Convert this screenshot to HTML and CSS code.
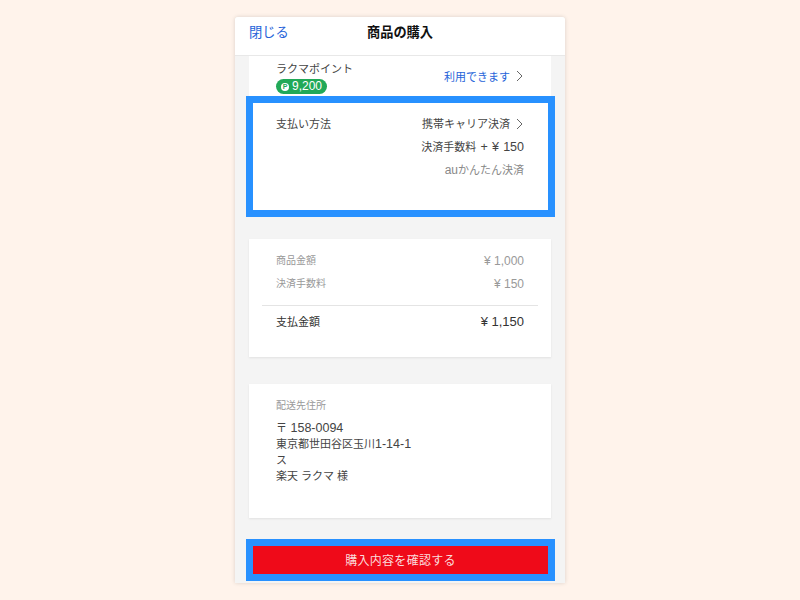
FILE: index.html
```html
<!DOCTYPE html>
<html lang="ja">
<head>
<meta charset="utf-8">
<title>商品の購入</title>
<link rel="stylesheet" href="styles.css">
</head>
<body>
<div class="phone">
  <header class="header">
    <a class="close">閉じる</a>
    <h1 class="title">商品の購入</h1>
  </header>
  <main class="content">
    <section class="card points">
      <div>
        <div class="label">ラクマポイント</div>
        <span class="badge"><span class="badge-p">P</span>9,200</span>
      </div>
      <div class="link-row">利用できます<svg class="chev" viewBox="0 0 7 12"><path d="M1 1l5 5-5 5"/></svg></div>
    </section>
    <section class="highlight pay">
      <div class="pay-row">
        <div class="label">支払い方法</div>
        <div class="pay-right">
          <div class="pay-method">携帯キャリア決済<svg class="chev" viewBox="0 0 7 12"><path d="M1 1l5 5-5 5"/></svg></div>
          <div class="pay-fee">決済手数料<span class="lat fee-amount"> + ¥ 150</span></div>
          <div class="pay-note"><span class="lat">au</span>かんたん決済</div>
        </div>
      </div>
    </section>
    <section class="card summary">
      <div class="sum-row"><span>商品金額</span><span class="num">¥ 1,000</span></div>
      <div class="sum-row"><span>決済手数料</span><span class="num">¥ 150</span></div>
      <hr class="rule">
      <div class="total-row"><span>支払金額</span><span class="num">¥ 1,150</span></div>
    </section>
    <section class="card address">
      <div class="addr-label">配送先住所</div>
      <div class="addr-text">〒<span class="lat"> 158-0094</span><br>東京都世田谷区玉川<span class="lat">1-14-1</span><br>ス<br>楽天 ラクマ 様</div>
    </section>
    <div class="highlight cta"><button class="buy">購入内容を確認する</button></div>
  </main>
</div>
</body>
</html>
```
FILE: styles.css
```css
* { box-sizing: border-box; }
html, body { margin: 0; height: 100%; }
body {
  background: #fff3eb;
  padding-top: 17px;
  font-family: "Liberation Sans", "Noto Sans CJK JP", sans-serif;
  color: #333;
  overflow: hidden;
}
.phone {
  width: 330px;
  height: 566px;
  margin: 0 auto;
  background: #f4f4f4;
  border-radius: 3px 3px 0 0;
  box-shadow: 0 0 4px rgba(0,0,0,.15);
  display: flex;
  flex-direction: column;
}
.header {
  height: 39px;
  flex: none;
  background: #fff;
  border-bottom: 1px solid #e8e8e8;
  border-radius: 3px 3px 0 0;
  position: relative;
  display: flex;
  justify-content: center;
  padding-top: 6px;
}
.close {
  position: absolute;
  left: 14px;
  top: 6px;
  font-size: 13.3px;
  line-height: 20px;
  color: #2563d9;
}
.title {
  margin: 0;
  font-size: 13.2px;
  line-height: 20px;
  font-weight: 700;
  color: #111;
}
.content {
  flex: 1;
  display: flex;
  flex-direction: column;
  align-items: center;
}
.card {
  width: 302px;
  background: #fff;
  padding: 0 27px;
  box-shadow: 0 1px 2px rgba(0,0,0,.08);
}
.points {
  height: 40px;
  flex: none;
  display: flex;
  justify-content: space-between;
  box-shadow: none;
}
.label {
  font-size: 11px;
  line-height: 14px;
  color: #444;
}
.points .label { margin-top: 6px; }
.badge {
  display: flex;
  align-items: center;
  width: fit-content;
  height: 15px;
  padding: 0 5px;
  margin-top: 3px;
  border-radius: 8px;
  background: #21a958;
  color: #fff;
  font-size: 12px;
  line-height: 15px;
}
.badge-p {
  width: 8px;
  height: 8px;
  border-radius: 50%;
  margin-right: 3px;
  background: #fff;
  color: #21a958;
  font-size: 7px;
  line-height: 8px;
  font-weight: 700;
  text-align: center;
}
.link-row {
  display: flex;
  align-items: center;
  height: 14px;
  margin-top: 13px;
  font-size: 11px;
  color: #2563d9;
}
.chev {
  width: 7px;
  height: 12px;
  margin: 0 1px 0 6px;
  fill: none;
  stroke: #666;
  stroke-width: 1;
}
.highlight {
  width: 309px;
  border: 7px solid #2891ff;
  background: #fff;
  margin-left: 1px;
  flex: none;
}
.pay {
  height: 121px;
  padding: 14px 24px 0 23px;
}
.pay-row {
  display: flex;
  justify-content: space-between;
}
.pay-right {
  display: flex;
  flex-direction: column;
  align-items: flex-end;
  font-size: 11px;
  line-height: 14px;
  color: #444;
}
.pay-method { display: flex; align-items: center; }
.pay-fee { margin-top: 9px; }
.pay-note { margin-top: 9px; color: #888; }
.lat { font-size: 12.5px; }
.fee-amount { word-spacing: 0.7px; }
.pay-note .lat { font-size: 12px; }
.summary {
  height: 118px;
  margin-top: 22px;
  padding: 15px 27px 0;
  flex: none;
}
.sum-row {
  display: flex;
  justify-content: space-between;
  font-size: 10px;
  line-height: 14px;
  color: #999;
  margin-bottom: 9px;
}
.num { font-size: 12px; }
.rule {
  margin: 14px -14px 8px;
  border: 0;
  border-top: 1px solid #e4e4e4;
}
.total-row {
  display: flex;
  justify-content: space-between;
  font-size: 11px;
  line-height: 16px;
  color: #333;
}
.total-row .num { font-size: 13px; }
.address {
  height: 134px;
  margin-top: 27px;
  padding: 15px 27px 0;
  flex: none;
}
.addr-label {
  font-size: 10px;
  line-height: 14px;
  color: #999;
}
.addr-text {
  margin-top: 7px;
  font-size: 11px;
  line-height: 16px;
  color: #444;
}
.cta {
  height: 42px;
  margin-top: 21px;
}
.buy {
  display: block;
  width: 100%;
  height: 28px;
  border: 0;
  padding: 0 0 2px;
  background: #ef0a19;
  color: #fbdcdc;
  font-family: inherit;
  font-size: 12px;
  letter-spacing: 0.3px;
}
```
